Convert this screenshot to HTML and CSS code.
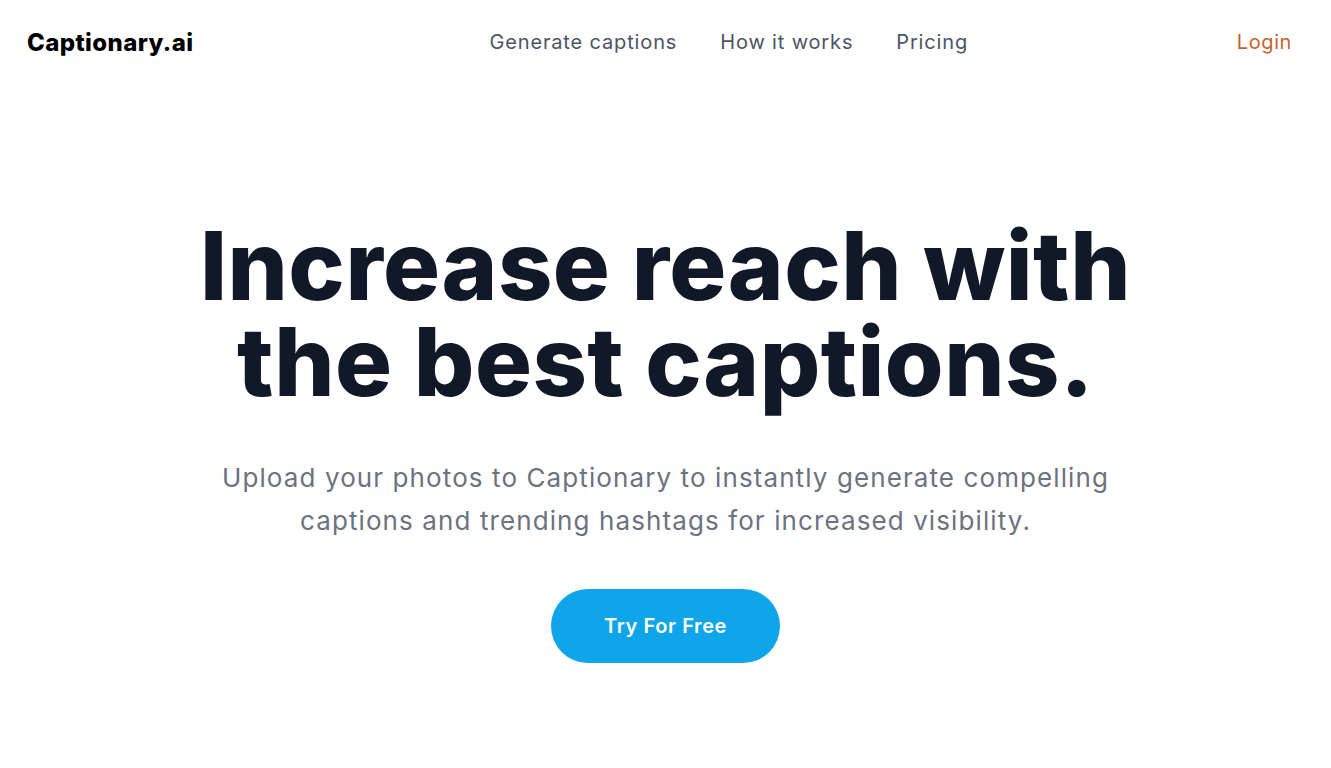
FILE: index.html
```html
<!DOCTYPE html>
<html lang="en">
<head>
<meta charset="utf-8">
<title>Captionary.ai</title>
<link rel="stylesheet" href="styles.css">
</head>
<body>
<header class="header">
  <a class="logo" href="#">Captionary.ai</a>
  <nav class="nav">
    <a href="#">Generate captions</a>
    <a href="#">How it works</a>
    <a href="#">Pricing</a>
  </nav>
  <a class="login" href="#">Login</a>
</header>
<main class="hero">
  <h1 class="title">Increase reach with<br>the best captions.</h1>
  <p class="subtitle">Upload your photos to Captionary to instantly generate compelling<br>captions and trending hashtags for increased visibility.</p>
  <a class="cta" href="#">Try For Free</a>
</main>
</body>
</html>
```
FILE: styles.css
```css
* { box-sizing: border-box; }
html, body { margin: 0; padding: 0; background: #fff; }
body { font-family: Inter, "Noto Sans", sans-serif; color: #111827; }
a { text-decoration: none; }

.header {
  display: flex;
  align-items: center;
  height: 84px;
  padding: 0 39px 0 27px;
}
.logo {
  font-size: 24px;
  font-weight: 800;
  letter-spacing: 0.4px;
  color: #000;
}
.nav {
  display: flex;
  gap: 43px;
  margin-left: 296px;
}
.nav a {
  font-size: 20px;
  letter-spacing: 0.85px;
  color: #4b5563;
  font-weight: 400;
}
.login {
  margin-left: auto;
  font-size: 20px;
  letter-spacing: 0.6px;
  color: #c8622a;
}

.hero {
  display: flex;
  flex-direction: column;
  align-items: center;
  text-align: center;
  padding-top: 134px;
}
.title {
  margin: 0;
  font-size: 95px;
  line-height: 96px;
  font-weight: 800;
  letter-spacing: 0.005em;
  color: #111827;
}
.subtitle {
  margin: 46px 0 0;
  font-size: 26px;
  line-height: 43px;
  letter-spacing: 1.1px;
  color: #6b7280;
}
.cta {
  margin-top: 47px;
  display: flex;
  align-items: center;
  justify-content: center;
  width: 229px;
  height: 74px;
  border-radius: 37px;
  background: #0ea5e9;
  color: #fff;
  font-size: 20px;
  font-weight: 600;
  letter-spacing: 0.6px;
}
```
